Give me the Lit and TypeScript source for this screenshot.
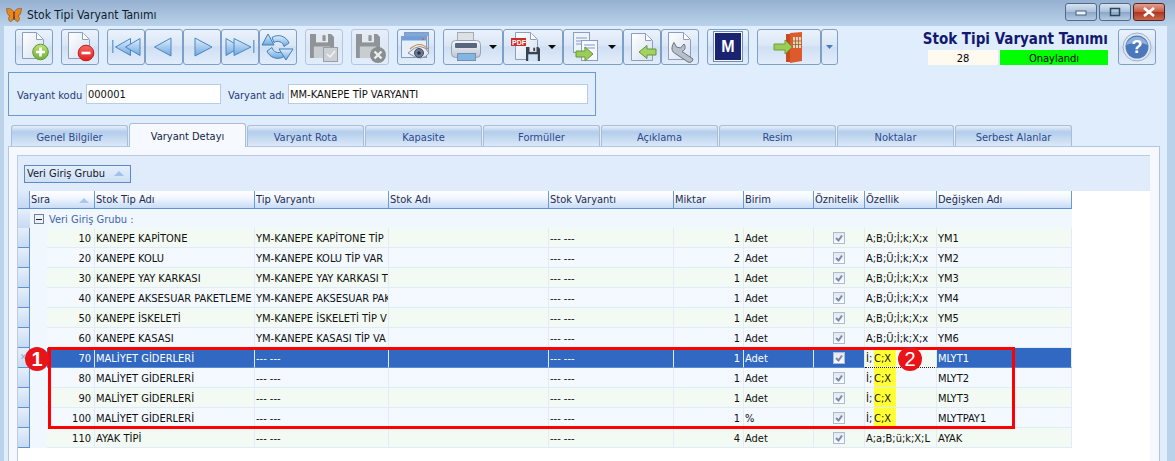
import { LitElement, html, css, svg } from "lit";
import { customElement } from "lit/decorators.js";

const page = (x = 7, y = 3, w = 21, h = 26) => svg`<path d="M${x + 0.5} ${y + 0.5}h${w - 7}l7 7v${h - 7}h-${w}z" fill="url(#pg)" stroke="#8c9dc0"/><path d="M${x + w - 6.5} ${y + 0.5}v7h6" fill="#fff" stroke="#8c9dc0"/>`;
const tri = (p: string) => svg`<path d="${p}" fill="url(#nav)" stroke="#4a86c5" stroke-linejoin="round"/>`;
const floppy = (x: number, y: number, s: number, c: string, lab: string) => svg`
  <path d="M${x} ${y}h${s * 0.88}l${s * 0.12} ${s * 0.12}v${s * 0.88}h-${s}z" fill="${c}"/>
  <rect x="${x + s * 0.25}" y="${y}" width="${s * 0.5}" height="${s * 0.35}" fill="#e6e9ee"/>
  <rect x="${x + s * 0.52}" y="${y + s * 0.05}" width="${s * 0.13}" height="${s * 0.24}" fill="${c}"/>
  <rect x="${x + s * 0.16}" y="${y + s * 0.52}" width="${s * 0.68}" height="${s * 0.48}" fill="${lab}"/>`;
const greenArrowR = (x: number, y: number) => svg`<path d="M${x} ${y - 3}h9v-4l8 7-8 7v-4h-9z" fill="#9ccb5a" stroke="#5f9a35" stroke-linejoin="round"/>`;
const greenArrowL = (x: number, y: number) => svg`<path d="M${x} ${y}l8-6.5v3.5h9v6h-9v3.5z" fill="#a4d065" stroke="#5f9a35" stroke-linejoin="round"/>`;
const dd = (x: number) => svg`<path d="M${x - 4} 16h8l-4 4z" fill="#0b0b0b"/>`;
const ar = (d: string) => svg`<path d="${d}" fill="url(#nav)" stroke="#3f7fbb" stroke-linejoin="round"/>`;

const icons: Record<string, unknown> = {
  add: svg`${page()}<circle cx="25.5" cy="23" r="7.8" fill="url(#grn)" stroke="#5e9a2e"/><path d="M25.5 18.5v9M21 23h9" stroke="#fff" stroke-width="2.6"/>`,
  del: svg`${page()}<circle cx="25" cy="24" r="7.8" fill="url(#red)" stroke="#c21b1b"/><path d="M20.5 24h9" stroke="#fff" stroke-width="2.6"/>`,
  first: svg`<rect x="5" y="11" width="1.5" height="13" fill="#6fa4d8"/>${tri("M8.5 18 23.5 9.5v17z")}${tri("M18.5 18 33 9.5v17z")}`,
  prev: svg`${tri("M9.5 18 26 9v18z")}`,
  next: svg`${tri("M12 9 29 18 12 27z")}`,
  last: svg`${tri("M5 9.5 19.5 18 5 26.5z")}${tri("M13 9.5 30 18 13 26.5z")}<rect x="32" y="11" width="1.5" height="13" fill="#6fa4d8"/>`,
  sync: svg`${ar("M13 8.500A11.500 11.500 0 0 1 30 14l-5 3.500a6.500 6.500 0 0 0-10-4z")}${ar("M9 5 3 16h12z")}${ar("M25 27.500A11.500 11.500 0 0 1 8 22l5-3.500a6.500 6.500 0 0 0 10 4z")}${ar("M27 31l7-11H20z")}`,
  savechk: svg`${floppy(5, 5, 24, "#8f9499", "#c9cdd2")}<rect x="18.500" y="18.500" width="14" height="14" fill="#ccd0d4" stroke="#9a9ea3"/><path d="M22 25l3 3 5-6" fill="none" stroke="#f2f3f4" stroke-width="1.500"/>`,
  savex: svg`${floppy(5, 5, 24, "#8f9499", "#c9cdd2")}<circle cx="27" cy="26" r="8" fill="#8a8e92"/><path d="M23.500 22.500l7 7m0-7-7 7" stroke="#eceded" stroke-width="2.400"/>`,
  view: svg`<rect x="7.500" y="3.500" width="24" height="19" fill="#c9def5" stroke="#7f9cc4"/><rect x="8" y="4" width="23" height="3" fill="#7fa7d8"/><rect x="4.500" y="7.500" width="25" height="21" fill="#e6f0fb" stroke="#7f9cc4"/><rect x="5" y="8" width="24" height="3.500" fill="#6f9fd8"/><circle cx="26" cy="10" r="1" fill="#e8503a"/><path d="M11 24q14-13 21 0-7 10-21 0z" fill="#e8edf3" stroke="#8a8f98"/><path d="M13 20q10-9 18 0" fill="none" stroke="#d18b3f" stroke-width="1.200"/><circle cx="22" cy="24" r="4.500" fill="#6a7a93" stroke="#3f4d66"/><circle cx="22" cy="24" r="1.800" fill="#27324a"/>`,
  print: svg`<rect x="14.500" y="3.500" width="16" height="11" fill="#dde0e5" stroke="#a6abb3"/><rect x="8.500" y="11.500" width="29" height="17" rx="4" fill="url(#prn)" stroke="#9aa3b1"/><rect x="12" y="14" width="22" height="5" rx="1" fill="#57667f"/><rect x="14.500" y="24.500" width="18" height="7" fill="#7fb6e4" stroke="#7e8ea6"/>${dd(50)}`,
  pdf: svg`${page(12, 3, 22, 27)}<rect x="8" y="9" width="15" height="8" fill="#c9302c"/><text x="9" y="15.500" font-size="7" font-weight="700" fill="#fff" font-family="Liberation Sans">PDF</text>${floppy(23, 18, 14, "#3a4250", "#cfe3f6")}${dd(49)}`,
  copy: svg`<rect x="10.500" y="3.500" width="16" height="20" fill="#eef3fa" stroke="#8c9dc0"/><path d="M13 9h11M13 12h11M13 15h7" stroke="#7f97c9"/><rect x="18.500" y="11.500" width="16" height="20" fill="#f5f8fc" stroke="#8c9dc0"/><path d="M21 16h11M21 19h11" stroke="#7f97c9"/>${greenArrowR(13, 25)}${dd(49)}`,
  back: svg`${page(8, 4, 21, 27)}${greenArrowL(16, 23)}`,
  tool: svg`${page(7, 3, 22, 27)}<path d="M13 13.500C10 18 10 23 15 25L27 33Q31 34.500 32 30L21 22.500C24.500 21 25 18 23 15L19.500 19 15.500 18z" fill="#b7bfca" stroke="#6a7382" stroke-linejoin="round"/>`,
  m: svg`<rect x="6.500" y="2.500" width="29" height="30" fill="#f5f7fa" stroke="#6d8cb5"/><rect x="8" y="4" width="26" height="27" fill="#1a2370"/><text x="21" y="23" text-anchor="middle" font-size="16" font-weight="700" fill="#fff" font-family="Liberation Sans">M</text>`,
  exit: svg`<path d="M29 5h5V33h-5z" fill="#c8481f"/><path d="M33 4l12-1v29l-12 2z" fill="#dc5a2b"/><path d="M36 8h8v11h-8z" fill="#e3d9b7"/><path d="M38.500 8v11M41.500 8v11M36 12h8M36 15.500h8" stroke="#9c5b34" stroke-width=".8"/><path d="M17 15h11v-4l7 7-7 7v-4H17z" fill="#9ccb5a" stroke="#6aa33a" stroke-linejoin="round"/>`,
};

const rows: [string, string, string, string, string, string, string][] = [
  ["10", "KANEPE KAPİTONE", "YM-KANEPE KAPİTONE TİP", "1", "Adet", "A;B;Ü;İ;k;X;x", "YM1"],
  ["20", "KANEPE KOLU", "YM-KANEPE KOLU TİP VAR", "2", "Adet", "A;B;Ü;İ;k;X;x", "YM2"],
  ["30", "KANEPE YAY KARKASI", "YM-KANEPE YAY KARKASI T", "1", "Adet", "A;B;Ü;İ;k;X;x", "YM3"],
  ["40", "KANEPE AKSESUAR PAKETLEME", "YM-KANEPE AKSESUAR PAK", "1", "Adet", "A;B;Ü;İ;k;X;x", "YM4"],
  ["50", "KANEPE İSKELETİ", "YM-KANEPE İSKELETİ TİP V", "1", "Adet", "A;B;Ü;İ;k;X;x", "YM5"],
  ["60", "KANEPE KASASI", "YM-KANEPE KASASI TİP VA", "1", "Adet", "A;B;Ü;İ;k;X;x", "YM6"],
  ["70", "MALİYET GİDERLERİ", "--- ---", "1", "Adet", "", "MLYT1"],
  ["80", "MALİYET GİDERLERİ", "--- ---", "1", "Adet", "", "MLYT2"],
  ["90", "MALİYET GİDERLERİ", "--- ---", "1", "Adet", "", "MLYT3"],
  ["100", "MALİYET GİDERLERİ", "--- ---", "1", "%", "", "MLYTPAY1"],
  ["110", "AYAK TİPİ", "--- ---", "4", "Adet", "A;a;B;ü;k;X;L", "AYAK"],
];
const tabs = ["Genel Bilgiler", "Varyant Detayı", "Varyant Rota", "Kapasite", "Formüller", "Açıklama", "Resim", "Noktalar", "Serbest Alanlar"];
const heads = ["Sıra", "Stok Tip Adı", "Tip Varyantı", "Stok Adı", "Stok Varyantı", "Miktar", "Birim", "Öznitelik", "Özellik", "Değişken Adı"];

@customElement("app-root")
export class AppRoot extends LitElement {
  static styles = css`
    :host { display: block; width: 1175px; height: 461px; overflow: hidden; font: 11px "DejaVu Sans Condensed", "Noto Sans", sans-serif; color: #10182c; }
    * { box-sizing: border-box; }
    .win { width: 1175px; height: 461px; display: flex; flex-direction: column; background: linear-gradient(#95b0d0, #bad2ea 26px, #bad2ea); padding: 0 8px 0 4px; position: relative; }
    .title { height: 26px; flex: none; display: flex; align-items: center; font-size: 12px; margin: 0 -8px 0 -4px; padding: 3px 10px 0 6px; gap: 5px; color: #0f1a2c; }
    .title .t { flex: 1; }
    .wb { width: 32px; height: 18px; flex: none; margin-left: -3px; border: 1px solid #4f6a8c; border-radius: 3px; background: linear-gradient(#d7e3f1, #a9c0da 50%, #8aa7c8 52%, #b5cbe2); display: flex; align-items: center; justify-content: center; margin-top: -5px; }
    .wb.x { background: linear-gradient(#e3a093, #c9583f 50%, #ad3420 52%, #c9694f); border-color: #5a2320; }
    .body { flex: 1; min-height: 0; background: #e0edfd; display: flex; flex-direction: column; }
    .tools { height: 39px; flex: none; padding: 3px 0 0 11px; display: flex; gap: 8px; }
    .grp { display: flex; }
    .btn { height: 36px; border: 1px solid #7f9fc6; border-radius: 3px; background: linear-gradient(#eaf2fc, #dbe7f6 45%, #cfdff2 50%, #e2edfb); display: block; padding: 0; flex: none; }
    .btn.dis { background: linear-gradient(#e6eef9, #dde8f6 50%, #e2edfb); border-color: #b4c6de; }
    .btn svg { display: block; margin: -1px; overflow: visible; }
    .spacer { flex: 1; }
    .status { width: 190px; margin-right: 2px; display: flex; flex-direction: column; align-items: flex-end; }
    .h1 { font: 700 15px "DejaVu Sans Condensed", "Noto Sans", sans-serif; color: #12196e; line-height: 20px; height: 21px; white-space: nowrap; }
    .st { display: flex; gap: 2px; }
    .st div { height: 15px; line-height: 17px; text-align: center; color: #000; }
    .st .n { width: 70px; background: #fffaf0; }
    .st .o { width: 108px; background: #00ff00; }
    .help { margin-right: 11px; }
    .form { margin: 7px 0 0 4px; width: 588px; height: 44px; flex: none; border: 1px solid #6a9bd0; display: flex; align-items: center; padding: 0 7px 0 8px; color: #1e3a78; }
    .form span { padding-top: 2px; }
    .inp { height: 20px; border: 1px solid #b9cce6; background: #fff; color: #101010; padding: 0 1px; line-height: 20px; white-space: nowrap; }
    .tabs { display: flex; margin: 7px 0 0 7px; height: 24px; flex: none; align-items: flex-end; position: relative; z-index: 1; }
    .tab { width: 117px; height: 21px; margin: 0 1px 1px 0; border: 1px solid #aabcd6; border-bottom: 0; border-radius: 3px 3px 0 0; background: linear-gradient(#e8f0fb, #b3cdec 30%, #dce8f8); text-align: center; line-height: 24px; color: #2c4a8c; }
    .tab.on { height: 24px; line-height: 26px; background: #f6faff; color: #15233f; margin-bottom: 0; }
    .page { flex: 1; min-height: 0; margin: -1px 7px 0 4px; background: #f5f9ff; border: 1px solid #b5c6de; border-bottom: 0; padding: 8px 9px 0 8px; display: flex; flex-direction: column; }
    .inner { flex: 1; min-height: 0; border-left: 1px solid #b9cae2; border-top: 1px solid #b9cae2; background: #fff; display: flex; flex-direction: column; }
    .gp { height: 35px; flex: none; background: #e0ecfc; padding: 9px 0 0 6px; }
    .gb { width: 107px; height: 18px; border: 1px solid #5b8ac7; background: linear-gradient(#e4eefb, #cfe0f5); display: flex; align-items: center; justify-content: space-between; padding: 0 6px 1px 2px; color: #10182c; }
    .up { width: 0; height: 0; border: 5px solid transparent; border-top: 0; border-bottom: 5px solid #9fc2ea; border-left-width: 5px; }
    .grid { width: 1054px; }
    .hd { display: grid; grid-template-columns: 12px 65px 160px 134px 160px 125px 70px 70px 51px 72px 135px; height: 18px; background: linear-gradient(#fdfeff, #f2f7fe 40%, #c7dcf6); border-bottom: 1px solid #5f93cf; }
    .hd div { border-right: 1px solid #6a9bd0; padding: 1px 0 0 1px; line-height: 16px; color: #1a2c52; white-space: nowrap; overflow: hidden; display: flex; justify-content: space-between; align-items: center; }
    .hd .up { margin-right: 5px; border-bottom-color: #a9c8ee; }
    .hd .ind { background: linear-gradient(#dfeafa, #c4d8f2); }
    .rw { display: grid; grid-template-columns: 12px 17px 48px 160px 134px 160px 125px 70px 70px 51px 72px 135px; height: 20px; line-height: 21px; background: #f3faf3; color: #101010; }
    .rw.alt { background: #f3f9ff; }
    .rw > div { border-right: 1px solid #e2ecf8; border-bottom: 1px solid #e2ecf8; padding: 0 1px; white-space: nowrap; overflow: hidden; }
    .rw > .ind { background: linear-gradient(#e6effb, #c7daf3); border: 0; border-right: 1px solid #5f93cf; border-bottom: 1px solid #5f93cf; padding: 0; display: flex; align-items: center; justify-content: center; color: #8aa7cf; font-size: 9px; }
    .rw > .gut { background: #f1f7ff; border-right: 0; border-bottom: 0; }
    .rw.group { display: flex; background: #f1f7ff; height: 19px; }
    .rw.group > div { border: 0; }
    .rw.group > .gtxt { display: flex; align-items: center; gap: 5px; padding: 1px 0 0 4px; color: #4066a8; flex: 1; }
    .exp { width: 10px; height: 10px; border: 1px solid #6f7f96; background: #eef3fa; display: flex; align-items: center; justify-content: center; }
    .exp i { width: 6px; height: 1px; background: #223; }
    .r { text-align: right; padding-right: 3px !important; }
    .c { display: flex; align-items: center; justify-content: center; }
    .chk { width: 12px; height: 12px; border: 1px solid #a9bcd8; background: linear-gradient(#e4e7ec, #fbfcfe); display: flex; }
    .chk svg { display: block; }
    .rw.sel { background: #3068c2; color: #fff; }
    .rw.sel > div:not(.ind):not(.gut) { border-right-color: #dfe9f7; border-bottom-color: #5c8bd6; }
    .rw.sel > .oz { background: #f3faf3; color: #101010; border-bottom: 1px dotted #222 !important; }
    .hl { display: flex; padding: 0 !important; }
    .hl span { padding-left: 1px; width: 9px; overflow: visible; white-space: nowrap; }
    .hl b { font-weight: 400; background: #ffff33; width: 22px; height: 20px; }
    .box { position: absolute; left: 48px; top: 347px; width: 967px; height: 82px; border: 3px solid #f00; pointer-events: none; }
    .bd { position: absolute; width: 24px; height: 24px; border-radius: 50%; background: #e8141a; color: #fff; font: 700 20px/24px "Liberation Sans", sans-serif; text-align: center; }
  `;

  btn(name: string, w: number, dis = false) {
    return html`<div class="btn ${dis ? "dis" : ""}" style="width:${w}px"><svg width=${w} height="36" viewBox="0 0 ${w} 36" fill="none">${icons[name]}</svg></div>`;
  }

  render() {
    return html`<div class="win">
      <div class="title">
        <svg width="16" height="16" viewBox="0 0 16 16"><path d="M8 6C7 2 3 1 .5 1.500 1 5 1 8 4 9c-2 1-2 4 0 5.500 2 .5 3-2 4-5 1 3 2 5.500 4 5 2-1.500 2-4.500 0-5.500 3-1 3-4 3.500-7.500C13 1 9 2 8 6z" fill="#e8871e" stroke="#8a4a0c" stroke-width=".6"/><path d="M8 5v8" stroke="#3a2208"/></svg>
        <span class="t">Stok Tipi Varyant Tanımı</span>
        <div class="wb"><svg width="12" height="8"><rect x="1" y="3" width="10" height="4" fill="#eef3f9" stroke="#45607f"/></svg></div>
        <div class="wb"><svg width="12" height="10"><rect x="1.500" y="1.500" width="9" height="7" fill="none" stroke="#2e4560" stroke-width="1.500"/></svg></div>
        <div class="wb x"><svg width="14" height="10"><path d="M2 1l10 8m0-8L2 9" stroke="#fff" stroke-width="2.600"/></svg></div>
      </div>
      <div class="body">
        <svg width="0" height="0" style="position:absolute">
          <defs>
            <linearGradient id="pg" x1="0" y1="0" x2="1" y2="1"><stop offset="0" stop-color="#fff"/><stop offset="1" stop-color="#d5e0f0"/></linearGradient>
            <linearGradient id="nav" x1="0" y1="0" x2="0" y2="1"><stop offset="0" stop-color="#e0eefb"/><stop offset="1" stop-color="#6fa8de"/></linearGradient>
            <linearGradient id="grn" x1="0" y1="0" x2="0" y2="1"><stop offset="0" stop-color="#c2e07a"/><stop offset="1" stop-color="#6fae38"/></linearGradient>
            <linearGradient id="red" x1="0" y1="0" x2="0" y2="1"><stop offset="0" stop-color="#f56a5f"/><stop offset="1" stop-color="#e01f1f"/></linearGradient>
            <linearGradient id="prn" x1="0" y1="0" x2="0" y2="1"><stop offset="0" stop-color="#f4f6f9"/><stop offset="1" stop-color="#bfc8d6"/></linearGradient>
          </defs>
        </svg>
        <div class="tools">
          ${this.btn("add", 38)}${this.btn("del", 38)}
          <div class="grp">${this.btn("first", 38)}${this.btn("prev", 38)}${this.btn("next", 38)}${this.btn("last", 38)}${this.btn("sync", 38)}</div>
          ${this.btn("savechk", 38, true)}${this.btn("savex", 38, true)}${this.btn("view", 38)}
          <div class="grp">${this.btn("print", 60)}${this.btn("pdf", 60)}${this.btn("copy", 60)}${this.btn("back", 38)}${this.btn("tool", 38)}</div>
          ${this.btn("m", 42)}
          <div class="grp">${this.btn("exit", 64)}<div class="btn" style="width:17px;display:flex;align-items:center;justify-content:center"><svg width="7" height="4" style="margin:0"><path d="M0 0h7L3.500 4z" fill="#4a7cc0"/></svg></div></div>
          <div class="spacer"></div>
          <div class="status">
            <div class="h1">Stok Tipi Varyant Tanımı</div>
            <div class="st"><div class="n">28</div><div class="o">Onaylandı</div></div>
          </div>
          <div class="btn help" style="width:38px"><svg width="38" height="36" viewBox="0 0 38 36"><circle cx="19" cy="18" r="14" fill="#dfe7f3" stroke="#9db0cc"/><circle cx="19" cy="18" r="11.500" fill="#4a78bb"/><path d="M8 16a11.500 11.500 0 0 1 22 0q-11-5-22 0z" fill="#8fb0dc"/><text x="19" y="24" text-anchor="middle" font-size="18" font-weight="700" fill="#fff" font-family="Liberation Sans">?</text></svg></div>
        </div>
        <div class="form">
          <span style="width:69px">Varyant kodu</span>
          <div class="inp" style="width:135px">000001</div>
          <span style="width:60px;margin-left:7px">Varyant adı</span>
          <div class="inp" style="width:300px">MM-KANEPE TİP VARYANTI</div>
        </div>
        <div class="tabs">${tabs.map((t, i) => html`<div class="tab ${i === 1 ? "on" : ""}">${t}</div>`)}</div>
        <div class="page">
          <div class="inner">
            <div class="gp"><div class="gb">Veri Giriş Grubu<i class="up"></i></div></div>
            <div class="grid">
              <div class="hd"><div class="ind"></div>${heads.map((h, i) => html`<div>${h}${i === 0 ? html`<i class="up"></i>` : ""}</div>`)}</div>
              <div class="rw group"><div class="ind" style="width:12px"></div><div class="gtxt"><span class="exp"><i></i></span>Veri Giriş Grubu :</div></div>
              ${rows.map((r, i) => {
                const mly = r[5] === "";
                return html`<div class="rw ${i % 2 ? "alt" : ""} ${i === 6 ? "sel" : ""}">
                  <div class="ind">${i === 6 ? "✕" : ""}</div><div class="gut"></div>
                  <div class="r">${r[0]}</div><div>${r[1]}</div><div>${r[2]}</div><div></div><div>--- ---</div>
                  <div class="r">${r[3]}</div><div>${r[4]}</div>
                  <div class="c"><span class="chk"><svg width="10" height="10"><path d="M2 5l2.500 2.500L8 2.500" fill="none" stroke="#7a8aa8" stroke-width="2"/></svg></span></div>
                  <div class="oz ${mly ? "hl" : ""}">${mly ? html`<span>İ;</span><b>C;X</b>` : r[5]}</div>
                  <div>${r[6]}</div>
                </div>`;
              })}
            </div>
          </div>
        </div>
      </div>
      <div class="box"></div>
      <div class="bd" style="left:25px;top:347px">1</div>
      <div class="bd" style="left:898px;top:347px;font-weight:400">2</div>
    </div>`;
  }
}
